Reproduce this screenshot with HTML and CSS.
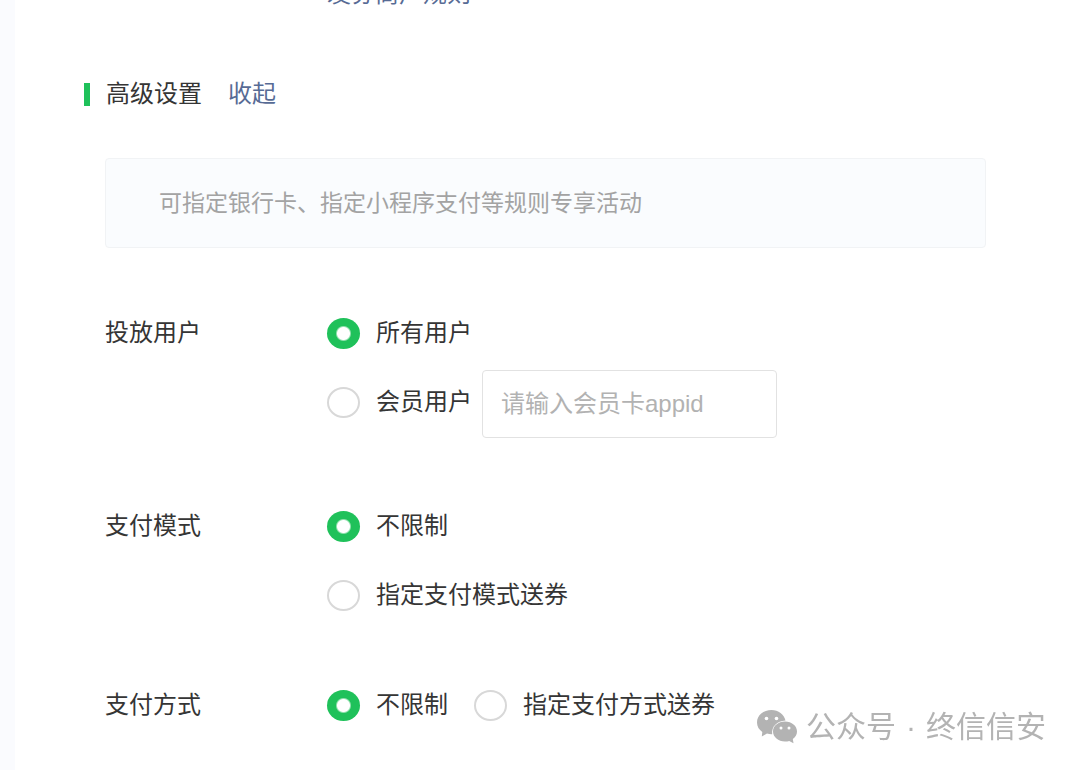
FILE: index.html
```
<!DOCTYPE html>
<html lang="zh-CN">
  <head>
    <meta charset="UTF-8" />
    <meta name="viewport" content="width=device-width, initial-scale=1.0" />
    <title>高级设置</title>
    <link rel="stylesheet" href="styles.css">
  </head>
  <body>
    <main class="panel">
      <div class="rule-link"><a href="#">发券商户规则</a></div>
      <div class="section-title">
        <h2>高级设置</h2>
        <a href="#">收起</a>
      </div>
      <form class="settings">
        <p class="notice">可指定银行卡、指定小程序支付等规则专享活动</p>

        <div class="form-group has-input" role="radiogroup" aria-labelledby="user-label">
          <div class="group-label" id="user-label">投放用户</div>
          <div class="options">
            <div class="option">
              <input type="radio" id="user-all" name="user" checked />
              <label for="user-all">所有用户</label>
            </div>
            <div class="option">
              <input type="radio" id="user-member" name="user" />
              <label for="user-member">会员用户</label>
              <input type="text" class="text-input" name="appid" placeholder="请输入会员卡appid" aria-label="会员卡appid" />
            </div>
          </div>
        </div>

        <div class="form-group" role="radiogroup" aria-labelledby="mode-label">
          <div class="group-label" id="mode-label">支付模式</div>
          <div class="options">
            <div class="option">
              <input type="radio" id="mode-any" name="mode" checked />
              <label for="mode-any">不限制</label>
            </div>
            <div class="option">
              <input type="radio" id="mode-set" name="mode" />
              <label for="mode-set">指定支付模式送券</label>
            </div>
          </div>
        </div>

        <div class="form-group" role="radiogroup" aria-labelledby="method-label">
          <div class="group-label" id="method-label">支付方式</div>
          <div class="options inline">
            <div class="option">
              <input type="radio" id="method-any" name="method" checked />
              <label for="method-any">不限制</label>
            </div>
            <div class="option">
              <input type="radio" id="method-set" name="method" />
              <label for="method-set">指定支付方式送券</label>
            </div>
          </div>
        </div>
      </form>
    </main>

    <div class="watermark">
      <svg width="40" height="34" viewBox="0 0 40 34" aria-hidden="true">
        <path fill="#b3b3b3" d="M14.500 0C6.500 0 0 5.200 0 12.500c0 4 2 7.200 5.300 9.500L4.800 26.500l5.200-3c1.800.5 3.400.8 5.200.7C14.300 16.500 20 11 28.500 10.500 27 4.500 21.500 0 14.500 0z" />
        <path fill="#b3b3b3" d="M28 11.500c-6.700 0-12 4.400-12 10s5.300 10 12 10c1.500 0 2.900-.2 4.200-.6l4.300 2.400-.7-4.300c2.600-1.900 4.200-4.500 4.200-7.500 0-5.600-5.300-10-12-10z" />
        <circle cx="9.500" cy="8.500" r="1.800" fill="#fff" />
        <circle cx="19.500" cy="8.500" r="1.800" fill="#fff" />
        <circle cx="24" cy="18" r="1.500" fill="#fff" />
        <circle cx="32" cy="18" r="1.500" fill="#fff" />
      </svg>
      <span>公众号</span>
      <span class="dot">·</span>
      <span>终信信安</span>
    </div>
  </body>
</html>
```
FILE: styles.css
```
body {
  font-family: "Liberation Sans", "Noto Sans CJK SC", sans-serif;
  font-size: 24px;
  line-height: 32px;
  color: #353535;
  background-color: #fafbfe;
  margin: 0;
}

a {
  color: #576b95;
  text-decoration: none;
}

.panel {
  box-sizing: border-box;
  min-height: 100vh;
  margin-left: 15px;
  padding: 0 94px 40px 69px;
  background-color: #fff;
  overflow: hidden;
}

.rule-link {
  margin-top: -22px;
  padding-left: 243px;
}

.section-title {
  display: flex;
  align-items: center;
  margin-top: 68px;
}

.section-title::before {
  content: "";
  width: 6px;
  height: 23px;
  margin-right: 16px;
  background-color: #1fc15a;
}

.section-title h2 {
  margin: 0 26px 0 0;
  font-size: 24px;
  font-weight: normal;
}

.settings {
  padding-left: 21px;
}

.notice {
  margin: 48px 0 69px;
  padding: 28px 53px;
  font-size: 23px;
  color: #a3a3a3;
  background-color: #fafcfe;
  border: 1px solid #f1f3f5;
  border-radius: 4px;
}

.form-group {
  display: flex;
  margin-bottom: 78px;
}

.form-group:last-child {
  margin-bottom: 0;
}

.has-input {
  margin-bottom: 92px;
}

.group-label {
  flex: none;
  width: 222px;
}

.options {
  display: flex;
  flex-direction: column;
  gap: 37px;
}

.options.inline {
  flex-direction: row;
  gap: 26px;
}

.option {
  display: flex;
  align-items: center;
  height: 32px;
}

.option input[type="radio"] {
  appearance: none;
  flex: none;
  box-sizing: border-box;
  width: 33px;
  height: 31px;
  margin: 0 16px 0 0;
  background-color: #fff;
  border: 2px solid #d8d8d8;
  border-radius: 50%;
}

.option input[type="radio"]:checked {
  border: none;
  background: radial-gradient(circle, #fff 6px, #1fc15a 8px);
}

.text-input {
  box-sizing: border-box;
  width: 295px;
  height: 68px;
  margin: 4px 0 0 10px;
  padding: 0 18px;
  font: inherit;
  border: 1px solid #e2e2e2;
  border-radius: 4px;
}

.text-input::placeholder {
  color: #b2b2b2;
}

.watermark {
  position: fixed;
  right: 34px;
  bottom: 23px;
  display: flex;
  align-items: center;
  font-size: 30px;
  line-height: 40px;
  color: #b3b3b3;
}

.watermark svg {
  margin-right: 9px;
}

.watermark .dot {
  width: 30px;
  text-align: center;
}
```
